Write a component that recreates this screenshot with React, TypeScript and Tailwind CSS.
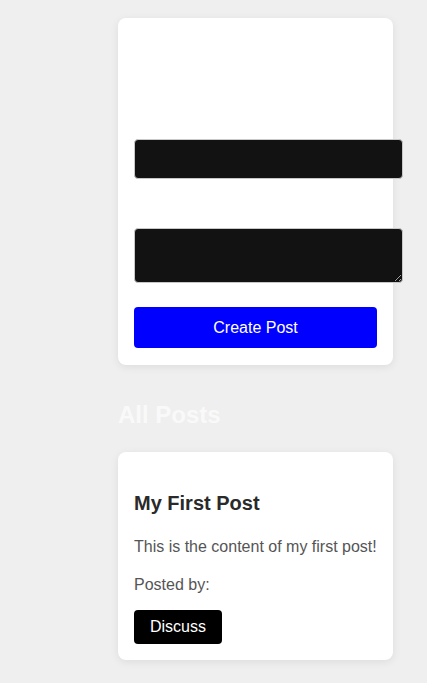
import React from 'react';

const App: React.FC = () => {
  return (
    <main className="min-h-screen bg-[#efefef] font-['Liberation_Sans',Arial,sans-serif]">
      <div className="pl-[118px] pt-[18px] pb-[23px] w-[393px]">
        <div className="bg-white rounded-lg shadow-[0_2px_8px_rgba(0,0,0,0.08)] px-4 pt-4 pb-[17px]">
          <h2 className="text-2xl font-bold text-white leading-[28px] mt-[16px]">Create a Post</h2>
          <label className="block text-white text-base leading-[18px] mt-[30px]">Title</label>
          <input
            type="text"
            className="block w-[269px] h-10 mt-[13px] bg-[#121212] border border-[#c8c8c8] rounded px-3 text-white outline-none"
          />
          <label className="block text-white text-base leading-[18px] mt-[18px]">Content</label>
          <textarea className="block w-[269px] h-[55px] mt-[13px] bg-[#121212] border border-[#c8c8c8] rounded px-3 py-2 text-white outline-none" />
          <button className="block w-[243px] h-[41px] mt-6 bg-[#0000ff] text-white text-base rounded">
            Create Post
          </button>
        </div>

        <h2 className="text-2xl font-bold text-[#f9f9f9] leading-[28px] mt-[36px]">All Posts</h2>

        <div className="bg-white rounded-lg shadow-[0_2px_8px_rgba(0,0,0,0.08)] p-4 mt-[23px]">
          <h3 className="text-xl font-bold text-[#2a2a2a] leading-[23px] mt-[24px]">My First Post</h3>
          <p className="text-base text-[#555] leading-[18px] mt-[23px]">This is the content of my first post!</p>
          <p className="text-base text-[#555] leading-[18px] mt-[20px]">Posted by:</p>
          <button className="mt-4 h-[34px] px-4 bg-black text-white text-base rounded">Discuss</button>
        </div>
      </div>
    </main>
  );
};

export default App;
